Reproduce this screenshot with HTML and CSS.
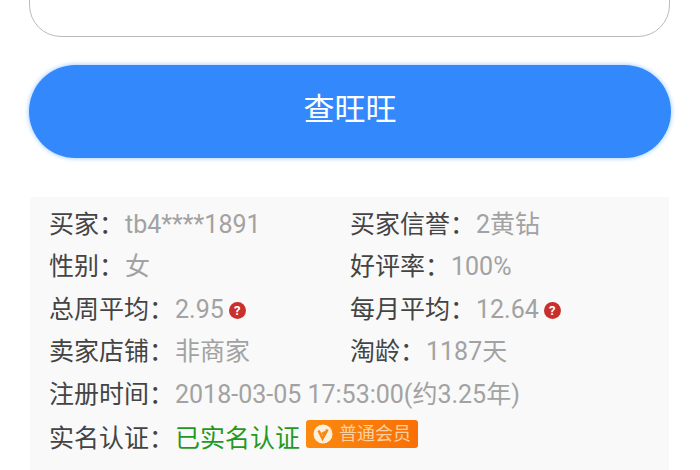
FILE: index.html
```html
<!DOCTYPE html>
<html lang="zh-CN">
<head>
  <meta charset="UTF-8" />
  <meta name="viewport" content="width=device-width, initial-scale=1.0" />
  <title>查旺旺</title>
  <link rel="stylesheet" href="styles.css">
</head>
<body>

  <div class="search-box"></div>

  <div class="search-btn">查旺旺</div>

  <div class="info">
    <div class="row">
      <div class="cell"><span class="label">买家：</span><span class="value">tb4****1891</span></div>
      <div class="cell"><span class="label">买家信誉：</span><span class="value">2黄钻</span></div>
    </div>
    <div class="row">
      <div class="cell"><span class="label">性别：</span><span class="value">女</span></div>
      <div class="cell"><span class="label">好评率：</span><span class="value">100%</span></div>
    </div>
    <div class="row">
      <div class="cell"><span class="label">总周平均：</span><span class="value">2.95</span><span class="help">?</span></div>
      <div class="cell"><span class="label">每月平均：</span><span class="value">12.64</span><span class="help">?</span></div>
    </div>
    <div class="row">
      <div class="cell"><span class="label">卖家店铺：</span><span class="value">非商家</span></div>
      <div class="cell"><span class="label">淘龄：</span><span class="value">1187天</span></div>
    </div>
    <div class="row">
      <div class="cell"><span class="label">注册时间：</span><span class="value">2018-03-05 17:53:00(约3.25年)</span></div>
    </div>
    <div class="row row-last">
      <div class="cell">
        <span class="label">实名认证：</span><span class="verified">已实名认证</span><span class="badge"><svg class="badge-icon" viewBox="0 0 20 20"><circle cx="10" cy="10" r="9.5" fill="#fff0dc"/><path d="M5.5 6.5 L9.5 14.5 L14.5 5.5 M9 10 L12 8" fill="none" stroke="#f58a12" stroke-width="2.6"/></svg>普通会员</span>
      </div>
    </div>
  </div>

</body>
</html>
```

FILE: styles.css
```css
html, body {
  height: 470px;
  overflow: hidden;
}
body {
  margin: 0;
  background-color: #fff;
  color: #333;
  font-family: Roboto, "Noto Sans CJK SC", sans-serif;
}
.search-box {
  height: 101px;
  margin: -64px 30px 0 29px;
  background-color: #fff;
  border: 1.5px solid #bbb;
  border-radius: 32px;
  box-sizing: border-box;
}
.search-btn {
  height: 93px;
  margin: 28px 29px 0 29px;
  background-color: #3388fb;
  border-radius: 47px;
  box-shadow: 0 0 5px #8cc4ff;
  color: #fff;
  font-size: 31px;
  line-height: 90px;
  text-align: center;
}
.info {
  margin: 39px 31px 0 30px;
  padding: 7px 19px 0 19px;
  height: 267px;
  background-color: #f9f9f9;
  font-size: 25px;
}
.row {
  display: flex;
  height: 42.4px;
  line-height: 42px;
}
.row-last {
  height: 46px;
  line-height: 46px;
}
.cell {
  flex: 0 0 301px;
  white-space: nowrap;
}
.label {
  color: #444;
}
.value {
  margin-left: 1px;
  color: #a2a2a2;
}
.verified {
  margin-left: 1px;
  color: #1f9a1f;
}
.help {
  display: inline-block;
  width: 17px;
  height: 17px;
  margin-left: 5px;
  border-radius: 50%;
  background-color: #c9302c;
  color: #fff;
  font-size: 13px;
  font-weight: bold;
  line-height: 17px;
  text-align: center;
  vertical-align: 3px;
}
.badge {
  display: inline-flex;
  align-items: center;
  gap: 6px;
  height: 28px;
  margin-left: 6px;
  padding: 0 7px;
  background: linear-gradient(90deg, #fb8a10, #f96f05);
  border-radius: 3px;
  color: #ffd0a0;
  font-size: 18px;
  line-height: 28px;
  vertical-align: 3px;
}
.badge-icon {
  width: 20px;
  height: 20px;
}
```
